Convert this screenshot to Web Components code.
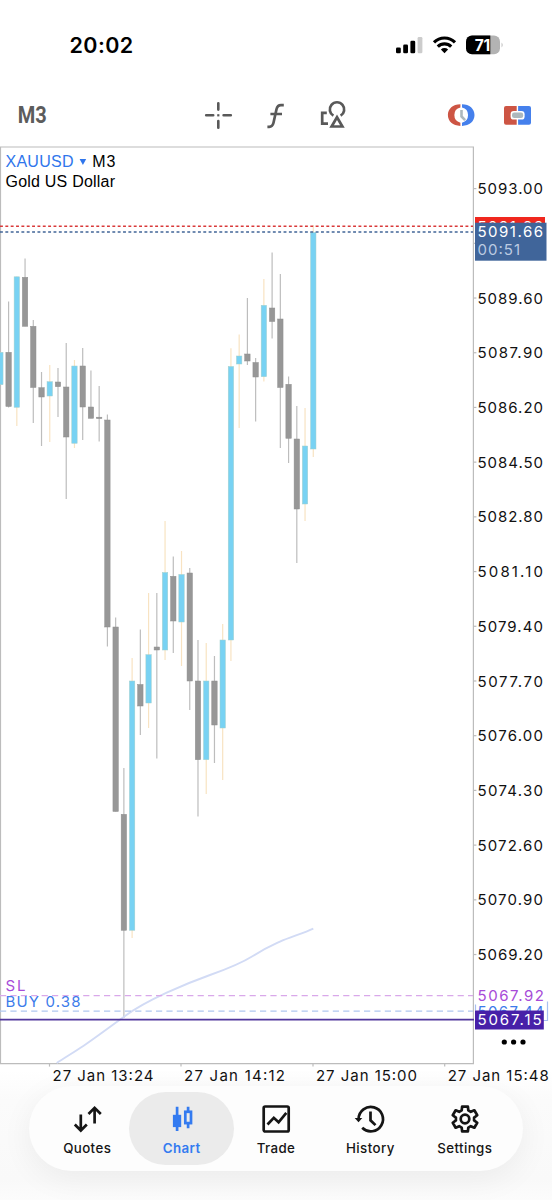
<!DOCTYPE html>
<html lang="en">
<head>
<meta charset="utf-8">
<title>Chart</title>
<style>
    body {
        margin: 0;
        width: 552px;
        height: 1200px;
        overflow: hidden;
        background: linear-gradient(#fff 1070px, #fbfbfb 1100px, #f9f9f9 1180px, #fcfcfc);
        font-family: Inter, "Liberation Sans", sans-serif;
        color: #000;
    }
</style>
</head>
<body>

<template id="status-tmpl">
    <style>
        :host {
            display: flex;
            justify-content: space-between;
            align-items: center;
            box-sizing: border-box;
            height: 90px;
            padding: 0 48px 0 69.5px;
        }

        time {
            font-size: 21.5px;
            font-weight: 600;
            letter-spacing: 0.4px;
        }

        svg {
            display: block;
        }
    </style>
    <time><slot></slot></time>
    <svg width="110" height="24" viewBox="394 33 110 24">
        <rect x="396" y="47.5" width="4.8" height="5.7" rx="1.3"/>
        <rect x="403.2" y="44.6" width="4.8" height="8.6" rx="1.3"/>
        <rect x="410.4" y="40.8" width="4.8" height="12.4" rx="1.3"/>
        <rect x="417.6" y="37" width="4.8" height="16.2" rx="1.3" fill="#ccc"/>
        <g fill="none" stroke="#000" stroke-width="3.2">
            <path d="M434 42.3a15 15 0 0 1 21 0"/>
            <path d="M437.8 46.6a9.6 9.6 0 0 1 13.4 0"/>
        </g>
        <path d="M444.5 53.2l-3.6-3.7a5.2 5.2 0 0 1 7.2 0z"/>
        <clipPath id="cell"><rect x="466" y="35.6" width="34" height="18.6" rx="6"/></clipPath>
        <g clip-path="url(#cell)">
            <rect x="466" y="35" width="34" height="20" fill="#b3b3b3"/>
            <rect x="466" y="35" width="24.3" height="20"/>
        </g>
        <path d="M501.6 42.5q2 2.4 0 4.9z" fill="#b3b3b3"/>
        <text x="482.3" y="50.6" font-size="15.5" font-weight="700" fill="#fff" text-anchor="middle" letter-spacing="-.3">71</text>
    </svg>
</template>

<template id="tools-tmpl">
    <style>
        :host {
            display: grid;
            grid-template-columns: 190px 1fr 124px;
            align-items: center;
            height: 50px;
        }

        svg {
            display: block;
        }

        .period {
            font: 700 23px Roboto, sans-serif;
            fill: #5c5c5c;
        }

        .stroke {
            fill: none;
            stroke: #595959;
            stroke-width: 2.7;
        }
    </style>
    <svg width="190" height="50" viewBox="0 90 190 50">
        <text class="period" x="17.8" y="123" textLength="29" lengthAdjust="spacingAndGlyphs">M3</text>
    </svg>
    <svg width="238" height="50" viewBox="190 90 238 50">
        <g class="stroke">
            <g stroke-linecap="round" stroke-width="2.6">
                <path d="M218.3 103.2v6.4M218.3 121v6.800M206.200 115.300h7M223.600 115.300h7.200"/>
            </g>
            <rect x="217.2" y="114.2" width="2.2" height="2.2" fill="#595959" stroke="none"/>
            <path d="M267.4 126.8h1.8c2.6 0 3.7-1.4 4.3-4l3-13.6c.6-2.8 2-4.1 4.5-4.1h2.8M270.4 114h11.6"/>
            <path d="M333.4 115.7a7.2 7.2 0 1 1 7.200 0"/>
            <path d="M326.8 112.8h-4.6v10.900h5.8"/>
            <path d="M337 117.2l-5.4 9.3h10.8z"/>
        </g>
    </svg>
    <svg width="124" height="50" viewBox="428 90 124 50">
        <path d="M460.4 104.3c-7.6 0-12.5 4.6-12.5 10.8s4.9 10.8 12.5 10.8v-3.2a7.8 7.8 0 0 1 0-15.2z" fill="#cd5544"/>
        <path d="M462 104.3c7.6 0 12.5 4.6 12.5 10.8s-4.9 10.8-12.5 10.8v-3.2a7.8 7.8 0 0 0 0-15.2z" fill="#4580ec"/>
        <path d="M461.5 110v6.4l3.6 3.8" fill="none" stroke="#adb8bd" stroke-width="2.6"/>
        <path d="M516.7 105.9h-10.7a2 2 0 0 0-2 2v14.8a2 2 0 0 0 2 2h10.7z" fill="#cd5544"/>
        <path d="M518.1 105.9h10.9a2 2 0 0 1 2 2v14.8a2 2 0 0 1-2 2h-10.9z" fill="#4580ec"/>
        <rect x="510.6" y="111" width="14" height="8.6" rx="3.2" fill="#fff"/>
        <rect x="512" y="112.6" width="11.2" height="5.4" rx="2.2" fill="#adb8bd"/>
    </svg>
</template>

<template id="chart-tmpl">
    <style>
        :host {
            display: block;
            height: 946px;
        }

        svg {
            display: block;
        }

        .title {
            font: 16px "Liberation Sans", sans-serif;
        }

        .scale {
            font-size: 15px;
            fill: #111;
        }

        .frame {
            fill: none;
            stroke: #bcbcbc;
            stroke-width: 1.2;
        }
    </style>
    <svg width="552" height="946" viewBox="0 140 552 946">
        <path class="frame" d="M.5 1063.6V147H473.4V1063.6H0"/>
        <g id="ticks" class="frame"></g>
        <g id="candles"></g>
        <path d="M56.7 1063C66 1057 75 1051.5 83.3 1046S112 1025.5 125 1016 152 999.5 166.7 992.7 196 980 210 975 240 964 253.3 955.7 271 946 280 941.7 303 933.5 313.3 928.7" fill="none" stroke="#d2dbf5" stroke-width="1.9"/>
        <path d="M0 226.3H473" stroke="#d93a3a" stroke-width="1.5" stroke-dasharray="2.9 2.45"/>
        <path d="M0 231.9H473" stroke="#426698" stroke-width="1.5" stroke-dasharray="2.9 2.45"/>
        <path d="M0 995.6H473" stroke="#d9a8ea" stroke-width="1.2" stroke-dasharray="6.2 4.2"/>
        <path d="M0 1011.2H473" stroke="#b0c7f0" stroke-width="1.2" stroke-dasharray="6.2 4.2"/>
        <path d="M0 1019.6H474" stroke="#50379c" stroke-width="1.8"/>

        <g class="title">
            <text x="5.5" y="166.5" fill="#2f76ec" textLength="68">XAUUSD</text>
            <path d="M79.6 159h6.6l-3.3 6z" fill="#2f76ec"/>
            <text x="92.3" y="166.5" textLength="23">M3</text>
            <text x="5.5" y="186.5" textLength="109.5">Gold US Dollar</text>
        </g>
        <g font-size="15">
            <text x="5.5" y="991.2" fill="#a74bd8" textLength="20">SL</text>
            <text x="5.5" y="1007.2" fill="#3c7bea" textLength="75">BUY 0.38</text>
        </g>

        <g id="scale" class="scale"></g>

        <rect x="475" y="217" width="70" height="12" fill="#f0271e"/>
        <text class="scale" x="477.5" y="231.9" textLength="65.5" style="fill:#fff">5091.86</text>
        <rect x="475" y="222.7" width="71.5" height="38" fill="#40659a"/>
        <text class="scale" x="477.5" y="237.3" textLength="65.5" style="fill:#fff">5091.66</text>
        <text class="scale" x="477.5" y="255.3" textLength="42.5" style="fill:#bccbe2">00:51</text>

        <text class="scale" x="477.5" y="1001.3" textLength="66.5" style="fill:#a74bd8">5067.92</text>
        <text class="scale" x="477.5" y="1017" textLength="66.5" style="fill:#3c7bea">5067.44</text>
        <path d="M475.5 1004.5v6M547.5 1001.5v19H543" fill="none" stroke="#a9bff0" stroke-width="1.2"/>
        <rect x="475" y="1010.5" width="68.8" height="19" fill="#4720a8"/>
        <text class="scale" x="477.5" y="1025.4" textLength="64" style="fill:#fff">5067.15</text>
        <circle cx="504.3" cy="1042" r="2.6"/>
        <circle cx="513.6" cy="1042" r="2.6"/>
        <circle cx="523" cy="1042" r="2.6"/>
    </svg>
</template>

<template id="tabs-tmpl">
    <style>
        :host {
            display: grid;
            grid-template-columns: repeat(5, 94.4px);
            box-sizing: border-box;
            width: 494px;
            height: 85px;
            margin: 0 29px;
            padding: 6px 11px;
            border-radius: 42.5px;
            background: #fdfdfd;
            box-shadow: 0 8px 32px rgba(0, 0, 0, 0.06);
        }
    </style>
    <slot></slot>
</template>

<template id="tab-tmpl">
    <style>
        :host {
            display: flex;
            flex-direction: column;
            align-items: center;
            gap: 4px;
            box-sizing: border-box;
            height: 73px;
            padding-top: 12px;
            font-size: 13.3px;
            font-weight: 500;
            line-height: 20px;
            letter-spacing: 0.4px;
            color: #151515;
        }

        :host([selected]) {
            margin: 0 -5.5px;
            border-radius: 36.5px;
            background: #ebebeb;
            color: #347bf0;
            font-weight: 600;
        }

        svg {
            display: block;
            overflow: visible;
            fill: none;
            stroke: currentColor;
            stroke-width: 2.7;
        }
    </style>
    <svg width="30" height="30" viewBox="0 0 30 30"></svg>
    <span><slot></slot></span>
</template>

<status-bar>20:02</status-bar>
<chart-tools></chart-tools>
<price-chart></price-chart>
<tab-bar>
    <tab-item icon="quotes">Quotes</tab-item>
    <tab-item icon="chart" selected>Chart</tab-item>
    <tab-item icon="trade">Trade</tab-item>
    <tab-item icon="history">History</tab-item>
    <tab-item icon="settings">Settings</tab-item>
</tab-bar>

<script>
    const tmpl = (id) => document.getElementById(id).content.cloneNode(true);

    class Base extends HTMLElement {
        connectedCallback() {
            this.attachShadow({ mode: 'open' });
            this.shadowRoot.append(tmpl(this.constructor.tmpl));
            this.render();
        }
        render() {}
    }

    customElements.define('status-bar', class extends Base {
        static tmpl = 'status-tmpl';
    });

    customElements.define('chart-tools', class extends Base {
        static tmpl = 'tools-tmpl';
    });

    // [up, high, body top, body bottom, low]
    const CANDLES = [
        [1, 352.3, 352.3, 384.7, 384.7],
        [0, 301.5, 352.3, 406.5, 407.5],
        [1, 276.5, 276.8, 407.3, 426],
        [0, 258.5, 277.3, 326.3, 326.3],
        [0, 320, 326.3, 387.5, 423],
        [0, 372, 387.7, 397, 446],
        [1, 365, 381.7, 396, 442],
        [0, 368, 382, 386.7, 417],
        [0, 343, 387, 437, 499],
        [1, 360, 366, 443.3, 448],
        [0, 348, 366, 407, 440],
        [0, 370.5, 407, 418.3, 418.3],
        [0, 386, 417.2, 418.6, 441.5],
        [0, 414.5, 420, 627, 646.5],
        [0, 617.5, 627, 811.5, 811.5],
        [0, 768, 814.3, 930.3, 1018],
        [1, 658, 681, 930.3, 938],
        [0, 629.5, 684.5, 706, 735],
        [1, 593, 654.7, 703, 728],
        [0, 593, 647, 650, 758.5],
        [1, 521, 572.5, 650, 660],
        [0, 556.5, 576.3, 621, 653],
        [1, 551, 574.5, 622, 666],
        [0, 568, 573, 681, 710],
        [0, 640, 681, 759.7, 816.5],
        [1, 643, 681, 759.7, 794],
        [0, 656, 681, 725, 763],
        [1, 624, 640, 728, 780],
        [1, 348.3, 366.5, 640, 661],
        [1, 334.5, 356, 364, 428],
        [0, 298, 354, 361, 365],
        [0, 358, 362.5, 377, 421.5],
        [1, 279, 305.3, 376.7, 381.5],
        [0, 252.5, 308, 321.5, 338.5],
        [0, 274, 319, 387.5, 448],
        [0, 376.5, 384.3, 438.3, 463],
        [0, 406, 439, 509, 563],
        [1, 408, 446, 504, 521],
        [1, 225, 232.5, 449, 457],
    ];
    const TIMES = [[49.5, '13:24'], [181, '14:12'], [313, '15:00'], [444.7, '15:48']];

    customElements.define('price-chart', class extends Base {
        static tmpl = 'chart-tmpl';
        render() {
            const $ = (id) => this.shadowRoot.getElementById(id);

            $('candles').innerHTML = CANDLES.map(([up, high, top, bottom, low], i) => {
                const x = 0.35 + i * 8.235;
                return `<path d="M${x} ${high}V${low}" stroke="${up ? '#f8e3c2' : '#bdbdbd'}" stroke-width="1.2"/>
                    <rect x="${x - 2.7}" y="${top}" width="5.4" height="${bottom - top}" fill="${up ? '#78d2f3' : '#979797'}"
                        stroke="${up ? '#a3cfcb' : '#8f8f8f'}" stroke-width=".5"/>`;
            }).join('');

            let ticks = '';
            let scale = '';
            for (let i = 0; i < 15; i++) {
                const y = 188.6 + i * 54.71;
                ticks += `<path d="M473.4 ${y}h3"/>`;
                // the current price tag covers the second mark
                if (i !== 1) {
                    scale += `<text x="477.5" y="${y + 5.6}" textLength="65.5">${(5093 - i * 1.7).toFixed(2)}</text>`;
                }
            }
            for (const [x, time] of TIMES) {
                ticks += `<path d="M${x} 1063.6v3"/>`;
                scale += `<text x="${x + 3}" y="1080.6" textLength="101">27 Jan ${time}</text>`;
            }
            $('ticks').innerHTML = ticks;
            $('scale').innerHTML = scale;
        }
    });

    customElements.define('tab-bar', class extends Base {
        static tmpl = 'tabs-tmpl';
    });

    // six-tooth outline around 15,15
    const gear = () => {
        const pts = [];
        for (let i = 0; i < 6; i++) {
            for (const [r, a] of [[9.2, -21], [12.8, -13], [12.8, 13], [9.2, 21]]) {
                const t = (i * 60 + a - 90) * Math.PI / 180;
                pts.push(`${(15 + r * Math.cos(t)).toFixed(2)} ${(15 + r * Math.sin(t)).toFixed(2)}`);
            }
        }
        return `M${pts.join('L')}z`;
    };

    const ICONS = {
        quotes: `<path d="M8.8 10.5V26M2.8 20.5l6 6 6-6M22.6 19.5V4M16.5 10l6.1-6.2 6.2 6.2"/>`,
        chart: `<path d="M10.1 2.7V27M21.1 2.7v5M21.1 20v4.3"/>
            <rect x="5.9" y="10.8" width="8.3" height="12.3" fill="currentColor" stroke="none"/>
            <rect x="18.3" y="7.8" width="5.7" height="11.3"/>`,
        trade: `<rect x="2.7" y="2.5" width="25" height="25" rx="1.5"/>
            <path d="M6.5 20.500l6.300-6.700 4.800 4.500 7.700-9.500"/>`,
        history: `<path d="M3.6 15A12.200 12.200 0 1 1 7.200 23.800"/>
            <path d="M-.3 14h7.600l-3.800 4.200z" fill="currentColor" stroke="none"/>
            <path d="M15.500 7.500V16.300l5 4.800"/>`,
        settings: `<path d="${gear()}" stroke-linejoin="round"/><circle cx="15" cy="15" r="4.300"/>`,
    };

    customElements.define('tab-item', class extends Base {
        static tmpl = 'tab-tmpl';
        render() {
            this.shadowRoot.querySelector('svg').innerHTML = ICONS[this.getAttribute('icon')];
        }
    });
</script>
</body>
</html>
